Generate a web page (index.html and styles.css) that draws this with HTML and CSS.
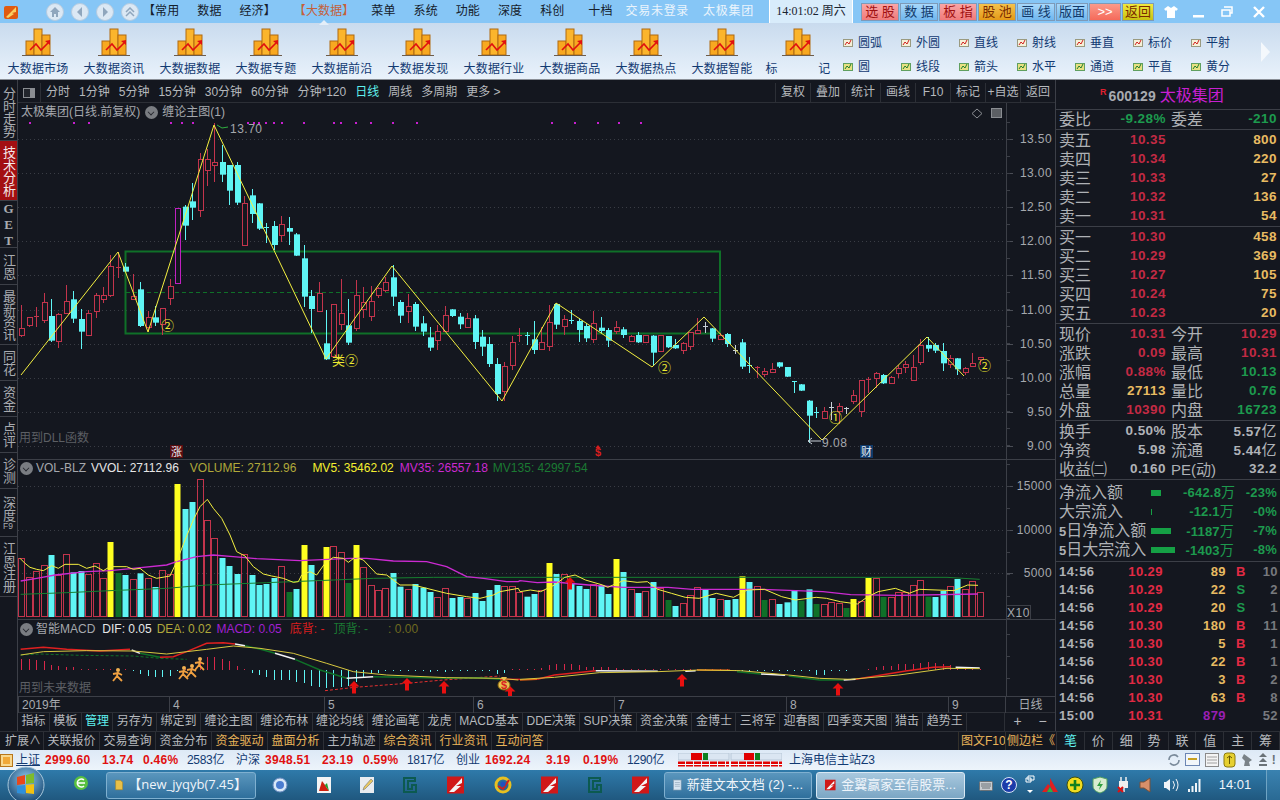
FILE: index.html
```html
<!DOCTYPE html>
<html lang="zh-CN">
<head>
  <meta charset="UTF-8" />
  <title>太极集团 600129</title>
  <link rel="stylesheet" href="styles.css">
</head>
<body>
  <svg class="defs" width="0" height="0">
    <symbol id="bigicon" viewBox="0 0 32 28">
      <rect x="4" y="13" width="8" height="14" fill="#f8a820" stroke="#b06a10" />
      <rect x="12" y="1" width="8" height="26" fill="#fbb52c" stroke="#b06a10" />
      <rect x="20" y="7" width="8" height="20" fill="#f8a820" stroke="#b06a10" />
      <path d="M0 27.5H32" stroke="#6d5c4a" />
      <path d="M8 22l6-6 5 6 7-7" fill="none" stroke="#e01010" stroke-width="1.6" />
      <path d="M23 13l5-1v5z" fill="#e01010" />
    </symbol>
    <symbol id="toolred" viewBox="0 0 10 8">
      <rect x=".5" y=".5" width="9" height="7" fill="#f5f0d8" stroke="#9a9a80" />
      <path d="M2 6l2-3 2 2 2-4" fill="none" stroke="#d02020" />
    </symbol>
    <symbol id="toolgreen" viewBox="0 0 10 8">
      <rect x=".5" y=".5" width="9" height="7" fill="#e8e080" stroke="#60a060" />
      <path d="M2 6l2-3 2 2 2-4" fill="none" stroke="#208030" />
    </symbol>
    <symbol id="redbolt" viewBox="0 0 18 18">
      <rect width="17" height="17" y=".5" fill="#d01818" />
      <path d="M2 16L15 2v5l-6 3 5 0-7 6z" fill="#f4f4f4" />
    </symbol>
    <symbol id="gicon" viewBox="0 0 16 18">
      <path d="M2 2h11v3H6v8h4V9h4v7H2z" fill="none" stroke="#0c5a50" stroke-width="2" />
    </symbol>
  </svg>

  <header class="titlebar">
    <svg class="logo" width="16" height="16" viewBox="0 0 16 16">
      <rect x="1" y="2" width="14" height="13" rx="2" fill="#e05a10" />
      <path d="M3 13L13 3v5l-4 1 2 1-6 4z" fill="#fbd060" />
    </svg>
    <div class="nav-btns">
      <span class="nav-btn"><svg width="10" height="10" viewBox="0 0 10 10"><path d="M5 0L0 5h2v5h2V7h2v3h2V5h2z" fill="#8fa6bd" /></svg></span>
      <span class="nav-btn"><svg width="10" height="10" viewBox="0 0 10 10"><path d="M7 0v10L2 5z" fill="#8fa6bd" /></svg></span>
      <span class="nav-btn"><svg width="10" height="10" viewBox="0 0 10 10"><path d="M3 0v10l5-5z" fill="#8fa6bd" /></svg></span>
      <span class="nav-btn"><svg width="10" height="10" viewBox="0 0 10 10"><path d="M1 5l4-4 4 4M1 9l4-4 4 4" fill="none" stroke="#8fa6bd" stroke-width="1.5" /></svg></span>
    </div>
    <nav class="menu">
      <span>【常用</span><span>数据</span><span>经济】</span>
      <span class="menu-active">【大数据】</span>
      <span>菜单</span><span>系统</span><span>功能</span><span>深度</span><span>科创</span>
      <span class="menu-far">十档</span>
      <span class="menu-login">交易未登录</span>
      <span class="menu-login">太极集团</span>
    </nav>
    <div class="clock">14:01:02 周六</div>
    <div class="quick-btns">
      <span class="qbtn pink wide">选 股</span>
      <span class="qbtn blue wide">数 据</span>
      <span class="qbtn pink wide">板 指</span>
      <span class="qbtn orange wide">股 池</span>
      <span class="qbtn blue wide">画 线</span>
      <span class="qbtn blue">版面</span>
      <span class="qbtn salmon">&gt;&gt;</span>
      <span class="qbtn yellow">返回</span>
    </div>
    <div class="win-btns">
      <svg width="14" height="12" viewBox="0 0 14 12"><path d="M4 0L0 3l2 2 1-1v8h8V4l1 1 2-2-4-3-3 2z" fill="#fff" /></svg>
      <svg width="14" height="12" viewBox="0 0 14 12"><rect x="1" y="9" width="11" height="2.5" fill="#fff" /></svg>
      <svg width="14" height="12" viewBox="0 0 14 12"><path d="M4 1h8v6h-2M2 4h8v6H2z" fill="none" stroke="#fff" stroke-width="1.5" /></svg>
      <svg class="win-close" width="14" height="12" viewBox="0 0 14 12"><path d="M2 1l10 10M12 1L2 11" stroke="#fff" stroke-width="2.4" /></svg>
    </div>
  </header>

  <section class="toolbar">
    <div class="bigtool"><svg width="32" height="28"><use href="#bigicon" /></svg><span>大数据市场</span></div>
    <div class="bigtool"><svg width="32" height="28"><use href="#bigicon" /></svg><span>大数据资讯</span></div>
    <div class="bigtool"><svg width="32" height="28"><use href="#bigicon" /></svg><span>大数据数据</span></div>
    <div class="bigtool"><svg width="32" height="28"><use href="#bigicon" /></svg><span>大数据专题</span></div>
    <div class="bigtool"><svg width="32" height="28"><use href="#bigicon" /></svg><span>大数据前沿</span></div>
    <div class="bigtool"><svg width="32" height="28"><use href="#bigicon" /></svg><span>大数据发现</span></div>
    <div class="bigtool"><svg width="32" height="28"><use href="#bigicon" /></svg><span>大数据行业</span></div>
    <div class="bigtool"><svg width="32" height="28"><use href="#bigicon" /></svg><span>大数据商品</span></div>
    <div class="bigtool"><svg width="32" height="28"><use href="#bigicon" /></svg><span>大数据热点</span></div>
    <div class="bigtool"><svg width="32" height="28"><use href="#bigicon" /></svg><span>大数据智能</span></div>
    <div class="bigtool"><svg width="32" height="28"><use href="#bigicon" /></svg><span class="spread"><i>标</i><i>记</i></span></div>
    <div class="drawtools">
      <span><svg width="10" height="8"><use href="#toolred" /></svg>圆弧</span>
      <span><svg width="10" height="8"><use href="#toolred" /></svg>外圆</span>
      <span><svg width="10" height="8"><use href="#toolred" /></svg>直线</span>
      <span><svg width="10" height="8"><use href="#toolred" /></svg>射线</span>
      <span><svg width="10" height="8"><use href="#toolred" /></svg>垂直</span>
      <span><svg width="10" height="8"><use href="#toolred" /></svg>标价</span>
      <span><svg width="10" height="8"><use href="#toolred" /></svg>平射</span>
      <span><svg width="10" height="8"><use href="#toolgreen" /></svg>圆</span>
      <span><svg width="10" height="8"><use href="#toolgreen" /></svg>线段</span>
      <span><svg width="10" height="8"><use href="#toolgreen" /></svg>箭头</span>
      <span><svg width="10" height="8"><use href="#toolgreen" /></svg>水平</span>
      <span><svg width="10" height="8"><use href="#toolgreen" /></svg>通道</span>
      <span><svg width="10" height="8"><use href="#toolgreen" /></svg>平直</span>
      <span><svg width="10" height="8"><use href="#toolgreen" /></svg>黄分</span>
    </div>
    <div class="tool-next"></div>
  </section>

  <main class="workspace">
    <div class="upper">
      <aside class="sidetabs">
        <div class="stab h58">分时走势</div>
        <div class="stab h60 on">技术分析</div>
        <div class="stab h47 latin">GET</div>
        <div class="stab h37">江恩</div>
        <div class="stab h60">最新资讯</div>
        <div class="stab h36">同花</div>
        <div class="stab h36">资金</div>
        <div class="stab h36">点评</div>
        <div class="stab h36">诊测</div>
        <div class="stab h48">深度<small>F9</small></div>
        <div class="stab h60">江恩注册</div>
      </aside>

      <div class="chartcol">
        <div class="periodbar">
          <span class="toggle"><i></i></span>
          <div class="periods">
            <span>分时</span><span>1分钟</span><span>5分钟</span><span>15分钟</span><span>30分钟</span><span>60分钟</span><span>分钟*120</span>
            <span class="cyan">日线</span><span>周线</span><span>多周期</span><span>更多 &gt;</span>
          </div>
          <div class="period-right">
            <span>复权</span><span>叠加</span><span>统计</span><span>画线</span><span>F10</span><span>标记</span><span>+自选</span><span>返回</span>
          </div>
        </div>

        <div class="pane pane-main" id="pane-main">
          <div class="legend legend-main">
            <span class="muted">太极集团(日线.前复权)</span><i class="dot"></i><span class="muted">缠论主图(1)</span>
          </div>
          <div class="pane-note note-dll">用到DLL函数</div>
        </div>
        <div class="pane pane-vol" id="pane-vol">
          <div class="legend legend-vol">
            <i class="dot"></i><span class="muted">VOL-BLZ</span><span class="white">VVOL: 27112.96</span><span class="olive">VOLUME: 27112.96</span><span class="yel">MV5: 35462.02</span><span class="mag">MV35: 26557.18</span><span class="grn">MV135: 42997.54</span>
          </div>
          <div class="x10">X10</div>
        </div>
        <div class="pane pane-macd" id="pane-macd">
          <div class="legend legend-macd">
            <i class="dot"></i><span class="muted">智能MACD</span><span class="white">DIF: 0.05</span><span class="olive">DEA: 0.02</span><span class="pur">MACD: 0.05</span><span class="red">底背: -</span><span class="grn">顶背: -</span><span class="olive dim">: 0.00</span>
          </div>
          <div class="pane-note note-future">用到未来数据</div>
        </div>

        <div class="dateaxis">
          <span class="d0">2019年</span><span class="d1">4</span><span class="d2">5</span><span class="d3">6</span><span class="d4">7</span><span class="d5">8</span><span class="d6">9</span>
          <span class="dayline">日线</span>
        </div>

        <div class="tabrow">
          <span>指标</span><span>模板</span><span class="cyan">管理</span><span>另存为</span><span>绑定到</span><span>缠论主图</span><span>缠论布林</span><span>缠论均线</span><span>缠论画笔</span><span>龙虎</span><span>MACD基本</span><span>DDE决策</span><span>SUP决策</span><span>资金决策</span><span>金博士</span><span>三将军</span><span>迎春图</span><span>四季变天图</span><span>猎击</span><span>趋势王</span>
          <span class="tab-fill"></span><span class="tab-pm">+</span><span class="tab-pm">−</span>
        </div>
      </div>

      <aside class="quote">
        <div class="q-head"><sup>R</sup><b>600129</b><span>太极集团</span></div>
        <div class="q-sec"><div class="q"><span>委比</span><b class="g">-9.28%</b><span>委差</span><b class="g">-210</b></div></div>
        <div class="q-sec">
          <div class="q book"><span>卖五</span><b class="r">10.35</b><b class="o">800</b></div>
          <div class="q book"><span>卖四</span><b class="r">10.34</b><b class="o">220</b></div>
          <div class="q book"><span>卖三</span><b class="r">10.33</b><b class="o">27</b></div>
          <div class="q book"><span>卖二</span><b class="r">10.32</b><b class="o">136</b></div>
          <div class="q book"><span>卖一</span><b class="r">10.31</b><b class="o">54</b></div>
        </div>
        <div class="q-sec">
          <div class="q book"><span>买一</span><b class="r">10.30</b><b class="o">458</b></div>
          <div class="q book"><span>买二</span><b class="r">10.29</b><b class="o">369</b></div>
          <div class="q book"><span>买三</span><b class="r">10.27</b><b class="o">105</b></div>
          <div class="q book"><span>买四</span><b class="r">10.24</b><b class="o">75</b></div>
          <div class="q book"><span>买五</span><b class="r">10.23</b><b class="o">20</b></div>
        </div>
        <div class="q-sec">
          <div class="q"><span>现价</span><b class="r">10.31</b><span>今开</span><b class="r">10.29</b></div>
          <div class="q"><span>涨跌</span><b class="r">0.09</b><span>最高</span><b class="r">10.31</b></div>
          <div class="q"><span>涨幅</span><b class="r">0.88%</b><span>最低</span><b class="g">10.13</b></div>
          <div class="q"><span>总量</span><b class="o">27113</b><span>量比</span><b class="g">0.76</b></div>
          <div class="q"><span>外盘</span><b class="r">10390</b><span>内盘</span><b class="g">16723</b></div>
        </div>
        <div class="q-sec">
          <div class="q"><span>换手</span><b class="w">0.50%</b><span>股本</span><b class="w">5.57<em>亿</em></b></div>
          <div class="q"><span>净资</span><b class="w">5.98</b><span>流通</span><b class="w">5.44<em>亿</em></b></div>
          <div class="q"><span>收益㈡</span><b class="w">0.160</b><span class="pe">PE(动)</span><b class="w">32.2</b></div>
        </div>
        <div class="q-sec flows">
          <div class="flow"><span>净流入额</span><i class="fbar w10"></i><b>-642.8<em>万</em></b><b>-23%</b></div>
          <div class="flow"><span>大宗流入</span><i class="fbar w1"></i><b>-12.1<em>万</em></b><b>-0%</b></div>
          <div class="flow"><span><strong>5</strong>日净流入额</span><i class="fbar w20"></i><b>-1187<em>万</em></b><b>-7%</b></div>
          <div class="flow"><span><strong>5</strong>日大宗流入</span><i class="fbar w24"></i><b>-1403<em>万</em></b><b>-8%</b></div>
        </div>
        <div class="trades">
          <div class="trade"><b>14:56</b><b class="r2">10.29</b><b class="o">89</b><b class="r2 bs">B</b><b class="n">10</b></div>
          <div class="trade"><b>14:56</b><b class="r2">10.29</b><b class="o">22</b><b class="g bs">S</b><b class="n">2</b></div>
          <div class="trade"><b>14:56</b><b class="r2">10.29</b><b class="o">20</b><b class="g bs">S</b><b class="n">1</b></div>
          <div class="trade"><b>14:56</b><b class="r2">10.30</b><b class="o">180</b><b class="r2 bs">B</b><b class="n">11</b></div>
          <div class="trade"><b>14:56</b><b class="r2">10.30</b><b class="o">5</b><b class="r2 bs">B</b><b class="n">1</b></div>
          <div class="trade"><b>14:56</b><b class="r2">10.30</b><b class="o">22</b><b class="r2 bs">B</b><b class="n">1</b></div>
          <div class="trade"><b>14:56</b><b class="r2">10.30</b><b class="o">3</b><b class="r2 bs">B</b><b class="n">2</b></div>
          <div class="trade"><b>14:56</b><b class="r2">10.30</b><b class="o">63</b><b class="r2 bs">B</b><b class="n">8</b></div>
          <div class="trade"><b>15:00</b><b class="r2">10.31</b><b class="p">879</b><b class="bs"></b><b class="n">52</b></div>
        </div>
      </aside>
    </div>

    <div class="lower">
      <div class="lower-tabs">
        <span>扩展∧</span><span>关联报价</span><span>交易查询</span><span>资金分布</span><span class="amber">资金驱动</span><span class="amber">盘面分析</span><span>主力轨迹</span><span class="amber">综合资讯</span><span class="amber">行业资讯</span><span class="amber">互动问答</span>
      </div>
      <div class="lower-right"><span>图文F10</span><span>侧边栏《</span></div>
      <div class="quote-tabs">
        <span class="cyan">笔</span><span>价</span><span>细</span><span>势</span><span>联</span><span>值</span><span>主</span><span>筹</span>
      </div>
    </div>
  </main>

  <footer class="statusbar">
    <i class="st-icon"></i>
    <a>上证</a>
    <b class="s1">2999.60</b><b class="s2">13.74</b><b class="s3">0.46%</b><span class="s4">2583亿</span>
    <a class="s5">沪深</a>
    <b class="s1">3948.51</b><b class="s2">23.19</b><b class="s3">0.59%</b><span class="s4">1817亿</span>
    <a class="s5">创业</a>
    <b class="s1">1692.24</b><b class="s2 s2b">3.19</b><b class="s3">0.19%</b><span class="s4">1290亿</span>
    <svg class="meters" width="104" height="14" viewBox="0 0 104 14">
      <rect y="0" width="51" height="7" fill="#dbe6f2" stroke="#b8c8d8" />
      <rect x="13" y="0" width="11" height="7" fill="#e00000" />
      <rect x="25" y="0" width="5" height="7" fill="#108020" />
      <rect x="53" y="0" width="51" height="7" fill="#dbe6f2" stroke="#b8c8d8" />
      <rect x="66" y="0" width="10" height="7" fill="#e00000" />
      <rect x="77" y="0" width="5" height="7" fill="#108020" />
      <path d="M0 11h51M53 11h51" stroke="#e00000" stroke-width="5" stroke-dasharray="7 1" />
      <path d="M0 11.5h104" stroke="#f4f8fc" />
    </svg>
    <a class="server">上海电信主站Z3</a>
    <div class="st-tray">
      <svg width="14" height="14" viewBox="0 0 14 14"><path d="M2 7a5 5 0 0 1 9-3M12 7a5 5 0 0 1-9 3" fill="none" stroke="#7a8a9a" stroke-width="1.6" /></svg>
      <svg width="16" height="14" viewBox="0 0 16 14"><rect x=".5" y=".5" width="14" height="12" fill="#f2f6fa" stroke="#6c86b4" /><path d="M3 6h9" stroke="#c8a020" stroke-width="2" /></svg>
      <svg width="14" height="14" viewBox="0 0 14 14"><rect x=".5" y=".5" width="13" height="13" fill="#f4f4f4" stroke="#8a8a8a" /><path d="M2 4h10M2 7h10M2 10h10" stroke="#a0a0a0" /></svg>
      <svg width="13" height="16" viewBox="0 0 13 16"><rect x="1" y="1" width="11" height="14" rx="3" fill="#e6d030" stroke="#8a7a10" /><path d="M6.5 4v8M4 6l2.5-2L9 6" fill="none" stroke="#6a5a00" /></svg>
      <svg width="14" height="14" viewBox="0 0 14 14"><path d="M4 1l8 6-3 2 1 4H4l1-5-3-3z" fill="#7a8288" /></svg>
      <svg width="10" height="14" viewBox="0 0 10 14"><path d="M5 0l4 4H1zM5 5l4 4H1zM1 11h8v2H1z" fill="#6a7278" /></svg>
      <b class="bang">!</b>
    </div>
  </footer>

  <footer class="taskbar">
    <svg class="orb" width="38" height="38" viewBox="0 0 38 38">
      <defs><radialGradient id="orbfill" cx=".5" cy=".35" r=".7"><stop offset="0" stop-color="#8fc8ee" /><stop offset="1" stop-color="#0f3f6a" /></radialGradient></defs>
      <circle cx="19" cy="19" r="18" fill="url(#orbfill)" stroke="#a8c8dc" />
      <path d="M10 11l8-2v9l-8 1z" fill="#e8481c" />
      <path d="M19 9l8-2v10l-8 1z" fill="#7ebb2c" />
      <path d="M10 20l8-1v9l-8-1z" fill="#2e90dc" />
      <path d="M19 19l8-1v10l-8-1z" fill="#f4c210" />
    </svg>
    <span class="tk tk-e"><svg width="14" height="16" viewBox="0 0 14 16"><circle cx="7" cy="8" r="7" fill="#58c040" /><path d="M3 8h8M10 5a4 4 0 1 0 0 6" fill="none" stroke="#fff" stroke-width="1.6" /></svg></span>
    <div class="task-btn tb-folder"><svg width="14" height="18" viewBox="0 0 14 18"><path d="M1 1h8l4 3v13H1z" fill="#e8c048" stroke="#a88420" /></svg>【new_jyqyb(7.45】</div>
    <div class="tk-icons">
      <svg width="16" height="16" viewBox="0 0 16 16"><circle cx="8" cy="8" r="7" fill="#d8e8f8" stroke="#6a8cc0" /><circle cx="8" cy="8" r="4" fill="#4a7cd0" /></svg>
      <svg width="14" height="16" viewBox="0 0 14 16"><rect width="14" height="16" fill="#f4f4f4" /><path d="M2 14l3-10 3 4 4 6z" fill="#d02010" /><path d="M5 4l3 4 2-2 2 8z" fill="#20a030" /></svg>
      <svg width="14" height="16" viewBox="0 0 14 16"><rect width="14" height="16" fill="#e8ecf0" /><path d="M3 13l1-3 7-8 2 2-8 8z" fill="#e8c860" stroke="#777" stroke-width=".6" /></svg>
      <svg width="16" height="18"><use href="#gicon" /></svg>
      <svg width="18" height="18"><use href="#redbolt" /></svg>
      <svg width="18" height="18" viewBox="0 0 18 18"><circle cx="9" cy="9" r="7" fill="none" stroke="#e8c020" stroke-width="3" /><path d="M4 10l5 3 6-9" fill="none" stroke="#d02020" stroke-width="2" /><circle cx="9" cy="8" r="2.5" fill="#2050c0" /></svg>
      <svg width="18" height="18"><use href="#redbolt" /></svg>
      <svg width="16" height="18"><use href="#gicon" /></svg>
      <svg width="18" height="18"><use href="#redbolt" /></svg>
    </div>
    <div class="task-btn tb-note"><svg width="14" height="18" viewBox="0 0 14 18"><rect x="1" y="1" width="12" height="16" fill="#d8e6f2" stroke="#8aa0b4" /><path d="M3 5h8M3 8h8M3 11h8" stroke="#8aa0b4" /></svg>新建文本文档 (2) -...</div>
    <div class="task-btn tb-active"><svg width="18" height="18"><use href="#redbolt" /></svg>金翼赢家至信股票...</div>
    <div class="tray">
      <svg width="14" height="12" viewBox="0 0 14 12"><rect x=".5" y="2.5" width="13" height="9" rx="1" fill="#c8ccd0" stroke="#6a7278" /><path d="M2 5h10M2 7h10M3 9h8" stroke="#6a7278" /></svg>
      <svg width="16" height="16" viewBox="0 0 16 16"><circle cx="8" cy="8" r="7.5" fill="#1c3caa" stroke="#d8e4f4" /><text x="8" y="12" class="tray-q">?</text></svg>
      <svg width="10" height="20" viewBox="0 0 10 20"><path d="M1 3h5v4H1zM3 1h6v4H3z" fill="none" stroke="#fff" /><path d="M2 15h6l-3 3z" fill="#fff" /></svg>
      <svg width="16" height="14" viewBox="0 0 16 14"><path d="M8 0l8 14h-5L8 8z" fill="#e02020" /><path d="M8 8l-3 6H0l6-8z" fill="#e02020" /><path d="M5 14l3-5 3 5z" fill="#30b040" /></svg>
      <svg width="18" height="18" viewBox="0 0 18 18"><circle cx="9" cy="9" r="8" fill="#f0dc20" stroke="#405010" /><path d="M9 4v10M4 9h10" stroke="#108020" stroke-width="2.6" /></svg>
      <svg width="16" height="18" viewBox="0 0 16 18"><path d="M8 1l7 2v7c0 4-4 6-7 7-3-1-7-3-7-7V3z" fill="#d8ecd0" stroke="#50a060" /><path d="M9 4l-4 6h3l-1 4 4-6H8z" fill="#30a040" /></svg>
      <svg width="16" height="18" viewBox="0 0 16 18"><rect x="3" y="5" width="9" height="7" fill="#f0f0f0" /><path d="M5 1v4M10 1v4M8 12v4" stroke="#f0f0f0" stroke-width="1.5" /><path d="M2 11l5 5M7 11l-5 5" stroke="#e01010" stroke-width="2" /></svg>
      <svg width="16" height="16" viewBox="0 0 16 16"><path d="M1 5h4l6-4v14l-6-4H1z" fill="#d8906a" stroke="#7a5038" /></svg>
      <svg width="16" height="14" viewBox="0 0 16 14"><path d="M1 4h2l4-3v12l-4-3H1z" fill="#f0f4f8" /><path d="M10 3q3 4 0 8M13 1q4 6 0 12" fill="none" stroke="#f0f4f8" /></svg>
      <svg width="14" height="14" viewBox="0 0 14 14"><path d="M1 11h2v3H1zM4.5 8h2v6h-2zM8 5h2v9H8zM11.5 1h2v13h-2z" fill="#f0f4f8" /></svg>
      <span class="tray-time">14:01</span>
      <i class="showdesk"></i>
    </div>
  </footer>

  <script src="chart.js"></script>
</body>
</html>
```

FILE: styles.css
```css
/* --- basic reset ---------------------------------------------------- */
* {
  margin: 0;
  padding: 0;
  box-sizing: border-box;
}

:root {
  --bg: #14171f;
  --line: #3c3f47;
  --text: #b6b9bd;
  --cyan: #5ff0ee;
  --amber: #e8b45a;
  --stack: "Liberation Sans", "Noto Sans CJK SC", sans-serif;
}

html, body {
  width: 1280px;
  height: 800px;
  overflow: hidden;
  background: var(--bg);
  color: var(--text);
  font: 12px/1.2 var(--stack);
}

i, em { font-style: normal; }
.defs { position: absolute; }

/* --- title bar ------------------------------------------------------ */
.titlebar {
  height: 23px;
  display: flex;
  align-items: center;
  background: #86c6f6;
  color: #15202b;
}
.logo { margin-left: 3px; }
.nav-btns {
  display: flex;
  gap: 7px;
  margin-left: 27px;
}
.nav-btn {
  width: 18px;
  height: 18px;
  border-radius: 50%;
  background: #dbe8f4;
  border: 1px solid #b4cbe0;
  display: flex;
  align-items: center;
  justify-content: center;
}
.menu {
  width: 624px;
  margin-left: 2px;
  padding-left: 2px;
  display: flex;
  gap: 18px;
  font-size: 12px;
  letter-spacing: 0.1px;
  white-space: nowrap;
}
.menu-active { color: #c4603a; margin: 0 -1px 0 0; position: relative; }
.menu-active::after {
  content: "";
  position: absolute;
  left: 25px;
  bottom: -6px;
  border: 5px solid transparent;
  border-bottom-color: #e4eef8;
  border-top: 0;
}
.menu-far { margin-left: 6px; }
.menu-login { color: #eaf4fc; letter-spacing: 0.7px; margin-left: -5px; }
.menu-login + .menu-login { margin-left: -4px; }
.clock {
  width: 84px;
  height: 23px;
  margin-left: 4px;
  line-height: 22px;
  text-align: center;
  color: #1a2430;
  background: #d8ecfb;
  border-left: 1px solid #fff;
  border-right: 1px solid #fff;
  white-space: nowrap;
  font-family: "Liberation Serif", "Noto Sans CJK SC", serif;
  font-size: 12px;
}
.quick-btns {
  display: flex;
  gap: 1px;
  margin-left: 8px;
}
.qbtn {
  width: 32px;
  height: 18px;
  line-height: 16px;
  text-align: center;
  color: #1a1a1a;
  border: 1px solid #7d9ab8;
  white-space: nowrap;
  font-size: 13px;
}
.qbtn.wide { width: 38px; }
.pink { background: linear-gradient(#f9a6a6, #f07a7a); color: #a01010; }
.blue { background: linear-gradient(#a8d8fb, #6fb6ee); color: #123a6a; }
.orange { background: linear-gradient(#f5c24c, #e49a18); color: #7a2a00; }
.salmon { background: linear-gradient(#fb9a8a, #f56a5a); color: #fff; }
.yellow { background: linear-gradient(#f2ea40, #c8c010); color: #7a2a00; }
.win-btns {
  flex: 1;
  display: flex;
  gap: 14px;
  align-items: center;
  padding-left: 10px;
}
.win-close { margin-left: 4px; }

/* --- big toolbar ---------------------------------------------------- */
.toolbar {
  height: 57px;
  display: flex;
  background: linear-gradient(#c9dbee, #e9f2fb);
  border-bottom: 1px solid #8a8f96;
  color: #123a72;
}
.bigtool {
  width: 76px;
  padding-top: 5px;
  display: flex;
  flex-direction: column;
  align-items: center;
  gap: 6px;
  white-space: nowrap;
  letter-spacing: 0.2px;
}
.bigtool svg { display: block; }
.spread {
  width: 65px;
  display: flex;
  justify-content: space-between;
}
.drawtools {
  margin-left: 7px;
  padding-top: 13px;
  display: grid;
  grid-template-columns: repeat(7, 58px);
  grid-auto-rows: 24px;
}
.drawtools span {
  display: flex;
  align-items: center;
  gap: 5px;
  height: 14px;
}
.tool-next {
  margin: 19px 0 0 12px;
  height: 0;
  border-left: 9px solid #f4f8fc;
  border-top: 10px solid transparent;
  border-bottom: 10px solid transparent;
}

/* --- workspace ------------------------------------------------------ */
.workspace {
  height: 670px;
  background: var(--bg);
}
.upper {
  height: 651px;
  display: flex;
}
.sidetabs {
  width: 18px;
  border-right: 1px solid var(--line);
  padding-top: 3px;
}
.stab {
  width: 17px;
  border-bottom: 1px solid var(--line);
  writing-mode: vertical-rl;
  text-orientation: upright;
  font-size: 13px;
  line-height: 17px;
  letter-spacing: -0.5px;
  text-align: center;
  color: #a8abb0;
  overflow: hidden;
}
.stab.on { background: #a30f12; color: #f4e8e8; }
.stab.latin {
  font-family: "Liberation Serif", serif;
  font-weight: bold;
  letter-spacing: 1px;
  font-size: 13px;
}
.stab small {
  font-size: 9px;
  letter-spacing: 0;
  text-combine-upright: all;
}
.h36 { height: 36px; }
.h37 { height: 37px; }
.h47 { height: 47px; }
.h48 { height: 48px; }
.h58 { height: 58px; }
.h60 { height: 60px; }

.chartcol {
  width: 1038px;
  border-right: 1px solid var(--line);
  padding-top: 3px;
}
.periodbar {
  height: 20px;
  display: flex;
  align-items: center;
  border-bottom: 1px solid #2c2f36;
}
.toggle {
  width: 23px;
  height: 20px;
  display: flex;
  align-items: center;
  justify-content: center;
  border-right: 1px solid #2c2f36;
}
.toggle i {
  width: 12px;
  height: 10px;
  border: 1px solid #8a8d92;
  background: linear-gradient(90deg, #22252c 60%, #8a8d92 60%);
}
.periods {
  flex: 1;
  display: flex;
  gap: 9px;
  padding-left: 5px;
  white-space: nowrap;
}
.period-right { display: flex; height: 20px; }
.period-right span {
  width: 35px;
  line-height: 19px;
  text-align: center;
  border-left: 1px solid #2c2f36;
  white-space: nowrap;
}
.cyan { color: var(--cyan); }

.pane {
  position: relative;
  border-bottom: 1px solid var(--line);
}
.pane svg { display: block; }
.pane-main { height: 357px; }
.pane-vol { height: 160px; }
.pane-macd { height: 77px; }
.legend {
  position: absolute;
  display: flex;
  align-items: center;
  white-space: nowrap;
}
.legend-main { top: 2px; left: 3px; gap: 5px; }
.legend-main .dot { margin-right: -1px; }
.legend-vol { top: 1px; left: 2px; gap: 5px; }
.legend-macd { top: 2px; left: 2px; gap: 5px; }
.dot {
  width: 13px;
  height: 13px;
  border-radius: 50%;
  background: #7a7d82;
  position: relative;
  flex: none;
}
.dot::after {
  content: "";
  position: absolute;
  left: 3px;
  top: 3px;
  width: 5px;
  height: 5px;
  border: solid #22252c;
  border-width: 0 1.5px 1.5px 0;
  transform: rotate(45deg) scale(0.8);
}
.legend-vol .dot { margin-right: -2px; }
.legend-macd .dot { margin-right: -2px; }
.muted { color: #a5a8ad; }
.white { color: #e6e6e6; }
.olive { color: #b0a83a; }
.yel { color: #f4f030; }
.mag { color: #cc2ad2; }
.grn { color: #1b7a33; }
.pur { color: #a020d0; }
.red { color: #d81e1e; }
.legend-vol .olive { margin-left: 6px; }
.legend-vol .yel { margin-left: 11px; }
.legend-vol .mag { margin-left: 1px; }
.legend-macd .white { margin-left: 2px; }
.legend-macd .red { margin-left: 3px; }
.legend-macd .grn { margin-left: 4px; }
.legend-macd .dim { color: #6e6a20; margin-left: 15px; }
.pane-note {
  position: absolute;
  left: 1px;
  color: #5c5f64;
}
.note-dll { top: 328px; }
.note-future { top: 61px; }
.x10 {
  position: absolute;
  left: 988px;
  top: 145px;
  width: 25px;
  height: 14px;
  line-height: 14px;
  text-align: center;
  border: solid #3c3f47;
  border-width: 1px 1px 0 1px;
  color: #a5a8ad;
  letter-spacing: 0.5px;
}

.dateaxis {
  height: 16px;
  display: flex;
  align-items: center;
  border-bottom: 1px solid #2c2f36;
}
.dateaxis span {
  padding-left: 3px;
  border-left: 1px solid var(--line);
  line-height: 16px;
  color: #a8abb0;
  white-space: nowrap;
}
.d0 { width: 151px; }
.d1 { width: 155px; }
.d2 { width: 149px; }
.d3 { width: 141px; }
.d4 { width: 172px; }
.d5 { width: 162px; }
.d6 { width: 57px; }
.dateaxis .dayline { flex: 1; text-align: center; padding: 0; }

.tabrow {
  height: 18px;
  display: flex;
  white-space: nowrap;
}
.tabrow span {
  padding: 0 3.4px;
  line-height: 17px;
  border-right: 1px solid #2c2f36;
}
.tabrow .tab-fill { flex: 1; padding: 0; }
.tabrow .tab-pm {
  width: 25px;
  text-align: center;
  padding: 0;
  font-size: 14px;
  border-right: 0;
  border-left: 0;
}

/* --- quote panel ---------------------------------------------------- */
.quote {
  width: 224px;
  padding-top: 3px;
  font-size: 13px;
}
.q-head {
  height: 27px;
  display: flex;
  align-items: center;
  padding-left: 44px;
  border-bottom: 1px solid var(--line);
  white-space: nowrap;
}
.q-head sup { color: #e02030; font: bold 9px var(--stack); margin: -8px 2px 0 0; }
.q-head b { color: #a8abb0; font-size: 14px; letter-spacing: 0.1px; }
.q-head span { color: #c81fd0; font-size: 16px; margin-left: 4px; }
.q-sec { border-bottom: 1px solid var(--line); padding: 0 3px; }
.q-sec + .q-sec { padding-top: 1px; }
.q {
  height: 19px;
  display: grid;
  grid-template-columns: 32px 75px 37px 1fr;
  align-items: center;
  white-space: nowrap;
}
.q span { font-size: 16px; color: #aeb1b5; line-height: 19px; }
.q span:nth-child(3) { padding-left: 5px; }
.q .pe { font-size: 15px; }
.q b { text-align: right; font-size: 13.5px; letter-spacing: 0.45px; }
.q em { font-size: 15px; font-weight: normal; }
.q.book b:last-child { grid-column: 3 / 5; }
.r { color: #c32a44; }
.r2 { color: #e22a44; }
.g { color: #1d9a4e; }
.o { color: #e8bb62; }
.w { color: #b0b3b8; }
.p { color: #9a1fb4; }

.q-sec + .flows { padding: 3px 2px 2px 3px; }
.flow {
  height: 19px;
  display: grid;
  grid-template-columns: 92px 32px 51px 43px;
  align-items: center;
  white-space: nowrap;
}
.flow span { font-size: 16px; line-height: 19px; color: #aeb1b5; }
.flow strong { font-size: 13px; }
.flow b { color: #1d9a4e; text-align: right; font-size: 13px; letter-spacing: 0.2px; }
.flow em { font-size: 14px; font-weight: normal; }
.fbar { height: 6px; background: #15a045; }
.w10 { width: 10px; }
.w1 { width: 1px; }
.w20 { width: 20px; }
.w24 { width: 24px; }

.trades { padding: 1px 2px 0 3px; }
.trade {
  height: 18px;
  display: grid;
  grid-template-columns: 50px 54px 63px 28px 24px;
  align-items: center;
  font-size: 13px;
  letter-spacing: 0.45px;
  color: #aeb1b5;
}
.trade b { text-align: right; }
.trade b:first-child { text-align: left; }
.trade .bs { text-align: center; padding-left: 2px; }
.trade .o { color: #e8bb62; }
.trade .p { color: #9a1fb4; }
.trade .n { color: #77797e; }

/* --- bottom tabs ---------------------------------------------------- */
.lower {
  height: 19px;
  display: flex;
  white-space: nowrap;
  border-top: 1px solid #2c2f36;
  background: #14171f;
}
.lower-tabs { width: 958px; display: flex; padding-left: 3px; }
.lower-tabs span {
  width: 56px;
  line-height: 18px;
  text-align: center;
  border-right: 1px solid #2c2f36;
}
.lower-tabs span:first-child { width: 41px; }
.amber { color: var(--amber); }
.lower-right { width: 98px; display: flex; color: var(--amber); }
.lower-right span {
  line-height: 18px;
  padding: 0 2px;
  border-left: 1px solid #33302a;
}
.lower-right span:first-child { width: 47px; }
.lower-right span:last-child { padding-left: 1px; }
.quote-tabs { width: 224px; display: flex; border-left: 1px solid #2c2f36; }
.quote-tabs span {
  flex: 1;
  line-height: 18px;
  text-align: center;
  font-size: 13px;
  border-right: 1px solid #2c2f36;
}

/* --- status bar ----------------------------------------------------- */
.statusbar {
  height: 20px;
  display: flex;
  align-items: center;
  background: linear-gradient(#dde9f6, #edf4fb);
  white-space: nowrap;
  font-size: 13px;
  color: #123a72;
}
.st-icon {
  flex: none;
  width: 13px;
  height: 13px;
  margin: 0 3px 0 0;
  background: #f0a838;
  border: 1px solid #b8761a;
  box-shadow: inset 0 0 0 2px #f8d890;
}
.statusbar a { font-size: 12px; text-decoration: underline; width: 25px; flex: none; }
.statusbar .s5 { text-decoration: none; margin-left: 11px; }
.statusbar b { color: #e01010; font-size: 12px; letter-spacing: 0.3px; flex: none; }
.s1 { width: 45px; margin-left: 4px; }
.s2 { width: 35px; margin-left: 12px; }
.s2b { margin-left: 16px; width: 31px; }
.s3 { width: 38px; margin-left: 6px; }
.s4 { width: 38px; margin-left: 6px; font-size: 12px; flex: none; letter-spacing: -0.3px; }
.meters { margin-left: 13px; flex: none; }
.statusbar .server { width: auto; text-decoration: none; margin-left: 7px; font-size: 12px; }
.st-tray {
  margin-left: auto;
  display: flex;
  align-items: center;
  gap: 4px;
  padding-right: 4px;
}
.statusbar .bang { color: #6a7278; }

/* --- taskbar -------------------------------------------------------- */
.taskbar {
  height: 30px;
  position: relative;
  display: flex;
  align-items: center;
  background: linear-gradient(#2f7aaa, #20587f);
  color: #eef4fa;
  white-space: nowrap;
}
.orb {
  position: absolute;
  left: 7px;
  top: -4px;
}
.tk-e { margin-left: 74px; width: 32px; }
.task-btn {
  height: 27px;
  display: flex;
  align-items: center;
  gap: 5px;
  padding: 0 8px;
  border: 1px solid #7fb0d0;
  border-radius: 3px;
  background: linear-gradient(#5a96bd, #2f6f9c);
  font-size: 13px;
  overflow: hidden;
}
.tb-folder { width: 150px; font-family: "Open Sans", "Noto Sans CJK SC", sans-serif; }
.tk-icons {
  width: 408px;
  padding: 0 14px 0 16px;
  display: flex;
  justify-content: space-between;
  align-items: center;
}
.tk-icons svg { flex: none; }
.tb-note { width: 148px; }
.tb-active {
  width: 149px;
  margin-left: 4px;
  background: linear-gradient(#a8c8de, #7ba6c4);
  border-color: #d8e8f4;
}
.tray {
  flex: 1;
  display: flex;
  align-items: center;
  justify-content: space-between;
  padding-left: 14px;
}
.tray-q {
  font: bold 12px "Liberation Sans", sans-serif;
  fill: #fff;
  text-anchor: middle;
}
.tray-time { margin-left: 10px; font-size: 13px; }
.showdesk {
  width: 14px;
  height: 30px;
  background: linear-gradient(#3a82b0, #2a6a94);
  border-left: 1px solid #6fa4c4;
  margin-left: 7px;
}

/* --- chart svg text ------------------------------------------------- */
.axis { font: 12px "Liberation Sans", sans-serif; fill: #a5a8ad; letter-spacing: 0.4px; }
.mark { font: 13px "Noto Sans CJK SC", sans-serif; fill: #f0ec30; }
.small { font: 12px "Liberation Sans", sans-serif; fill: #a5a8ad; letter-spacing: 0.5px; }
.tag { font: 11px "Noto Sans CJK SC", sans-serif; fill: #e8eef6; }
.tag-red { font: bold 11px "Liberation Sans", sans-serif; fill: #d81e1e; }
```

FILE: chart.js
```js
// Every pane is an svg whose viewBox uses page coordinates, so values read
// off the chart can be written down directly.
const NS = "http://www.w3.org/2000/svg";
const RED = "#c3344c";
const CYAN = "#5ff5f5";
const GREEN = "#0f7028";
const YELLOW = "#ffff20";

function pane(id, top, height) {
  const svg = document.createElementNS(NS, "svg");
  svg.setAttribute("width", 1038);
  svg.setAttribute("height", height);
  svg.setAttribute("viewBox", `18 ${top} 1038 ${height}`);
  const host = document.getElementById(id);
  host.insertBefore(svg, host.firstChild);
  return svg;
}

function add(svg, tag, attrs, text) {
  const el = document.createElementNS(NS, tag);
  Object.keys(attrs).forEach((k) => el.setAttribute(k, attrs[k]));
  if (text) el.textContent = text;
  svg.appendChild(el);
  return el;
}

const line = (svg, x1, y1, x2, y2, stroke, extra) =>
  add(svg, "line", Object.assign({ x1, y1, x2, y2, stroke, "shape-rendering": "crispEdges" }, extra));

const poly = (svg, pts, stroke, extra) =>
  add(svg, "polyline", Object.assign({ points: pts.map((p) => p.join(",")).join(" "), stroke, fill: "none" }, extra));

const barX = (i) => 21.3 + 7.43 * i;

function grid(svg, ys, labels) {
  ys.forEach((y, i) => {
    line(svg, 18, y + 0.5, 1006, y + 0.5, "#3a3d45", { "stroke-dasharray": "1 3" });
    if (labels) {
      line(svg, 1006, y + 0.5, 1013, y + 0.5, "#4a4d55");
      add(svg, "text", { x: 1052, y: y + 4, class: "axis", "text-anchor": "end" }, labels[i]);
    }
  });
  line(svg, 1006.5, ys[0] - 40, 1006.5, ys[ys.length - 1] + 100, "#3c3f47");
}

/* --- main chart ----------------------------------------------------- */
// [wick top, body top, body bottom, wick bottom, kind]
const candlesA = [
  [615,683,705,712,"r"],[650,652,675,682,"r"],[620,648,648,680,"r"],[578,606,660,668,"r"],[598,648,722,725,"c"],
  [640,643,725,745,"r"],[555,603,638,640,"r"],[573,598,656,670,"c"],[628,657,695,748,"c"],[630,640,706,706,"r"],
  [580,585,634,655,"r"],[560,584,596,610,"r"],[465,497,585,590,"r"],[455,503,503,533,"r"],[490,500,515,515,"c"],
  [522,588,596,600,"r"],[545,568,678,680,"c"],[632,650,680,695,"r"],[618,652,668,678,"c"],[625,625,672,706,"r"],
  [538,558,595,615,"r"],[325,325,550,550,"m"],[315,320,377,420,"c"],[248,304,323,360,"c"],[160,176,328,352,"r"],
  [148,176,208,258,"r"],[70,187,197,247,"r"],[135,186,224,245,"c"],[195,195,272,315,"c"],[187,195,308,315,"c"],
  [288,310,437,437,"r"],[268,286,342,370,"c"],[310,310,386,390,"c"],[370,381,381,428,"c"],[362,378,435,450,"c"],
  [348,373,405,425,"r"],[352,384,395,435,"c"],[400,403,467,468,"c"],[435,475,590,620,"c"],[570,588,627,700,"c"],
  [546,578,633,635,"r"],[630,730,778,780,"c"],[613,613,770,775,"r"],[538,640,672,690,"r"],[598,676,728,735,"c"],
  [540,586,685,693,"r"],[560,606,628,655,"r"],[558,603,647,662,"r"],[560,565,587,595,"r"],[530,547,570,575,"r"],
  [495,532,590,618,"c"],[600,606,647,668,"c"],[582,619,635,668,"r"],[605,612,680,692,"c"],
];
const candlesB = [
  [258,280,305,318,"c"],[290,322,353,362,"c"],[285,302,328,360,"r"],[228,256,305,305,"r"],[238,238,258,260,"c"],
  [248,260,283,298,"c"],[250,265,292,295,"r"],[255,265,336,358,"c"],[300,320,350,378,"c"],[322,342,402,410,"c"],
  [385,402,492,512,"c"],[395,408,482,512,"r"],[318,335,405,420,"r"],[295,317,317,335,"r"],[305,315,315,345,"c"],
  [272,328,360,372,"c"],[292,335,356,360,"r"],[225,275,347,362,"r"],[220,222,284,298,"c"],[255,268,290,315,"r"],
  [240,270,270,282,"c"],[265,273,300,335,"c"],[280,288,325,335,"c"],[242,280,328,340,"r"],[262,293,303,310,"c"],
  [295,300,332,350,"c"],[272,290,302,312,"r"],[290,298,315,325,"c"],[315,317,332,332,"r"],[305,315,337,340,"c"],
  [316,316,338,340,"r"],[315,317,368,408,"c"],[315,315,362,365,"r"],[318,318,352,355,"c"],[328,345,355,358,"c"],
  [335,340,362,372,"r"],[305,305,347,360,"r"],[265,300,308,312,"r"],[275,290,290,308,"w"],[295,295,326,335,"c"],
  [310,315,326,327,"r"],[310,312,342,350,"c"],[345,362,362,372,"w"],[328,337,410,418,"c"],[382,405,405,430,"c"],
  [408,412,412,445,"r"],[415,422,432,440,"r"],[398,416,424,425,"r"],[397,397,410,415,"c"],[411,411,440,442,"c"],
  [455,455,455,488,"c"],[463,463,482,482,"c"],[510,512,557,638,"c"],[530,547,547,565,"c"],[532,544,566,566,"r"],
  [517,533,533,570,"w"],[520,527,541,582,"r"],[530,535,535,552,"w"],[480,496,514,522,"r"],[451,451,545,560,"r"],
  [440,447,447,488,"r"],[425,430,445,475,"r"],[432,435,460,462,"c"],[438,441,460,462,"r"],[405,415,430,445,"r"],
  [392,403,412,428,"r"],[375,412,450,452,"r"],[328,345,395,405,"r"],[320,345,356,365,"c"],[340,345,362,370,"c"],
  [340,363,400,422,"c"],[375,385,403,415,"r"],[385,385,418,435,"c"],[412,413,425,436,"r"],[370,400,410,410,"r"],
  [380,380,386,405,"r"],
];
const candles = candlesA.map((c) => c.slice(0, 4).map((v) => 100 + v / 3).concat(c[4]))
  .concat(candlesB.map((c) => c.slice(0, 4).map((v) => 230 + v / 3).concat(c[4])));

const main = pane("pane-main", 103, 356);
grid(main, [139, 173, 207, 241, 275, 310, 344, 378, 412, 446],
  ["13.50", "13.00", "12.50", "12.00", "11.50", "11.00", "10.50", "10.00", "9.50", "9.00"]);
for (let y = 122; y < 460; y += 17) line(main, 1006, y + 0.5, 1010, y + 0.5, "#3c3f47");

[29, 73, 88, 170, 181, 192, 247, 253, 258, 265, 273, 281, 303, 333, 340, 355, 370, 392, 416, 551, 574, 597, 618, 640]
  .forEach((x) => add(main, "rect", { x, y: 122, width: 2, height: 2, fill: "#c81fd0" }));

add(main, "rect", { x: 125.5, y: 251.5, width: 594.5, height: 82, fill: "none", stroke: GREEN, "stroke-width": 2 });
line(main, 126, 292.5, 719, 292.5, GREEN, { "stroke-dasharray": "4 3" });

candles.forEach((c, i) => {
  const x = Math.round(barX(i));
  const [top, bodyT, bodyB, bot, kind] = c;
  const color = { r: RED, c: CYAN, m: "#c020c0", w: "#c8d0d8" }[kind];
  line(main, x + 0.5, top, x + 0.5, bot, color);
  if (bodyB - bodyT < 1) {
    line(main, x - 2, bodyT, x + 3, bodyT, color);
  } else if (kind === "c") {
    add(main, "rect", { x: x - 2, y: bodyT, width: 6, height: bodyB - bodyT, fill: color });
  } else {
    add(main, "rect", { x: x - 2, y: Math.round(bodyT) + 0.5, width: 5, height: Math.round(bodyB - bodyT), fill: "#14171f", stroke: color, "shape-rendering": "crispEdges" });
  }
});

poly(main, [[21, 375], [118, 252], [148, 332], [214, 125], [326, 359], [392, 266], [502, 401], [556, 303], [652, 367], [704, 317], [822, 440], [927, 337], [964, 376]], "#f4f040");

add(main, "text", { x: 230, y: 133, class: "small" }, "13.70");
poly(main, [[217, 125], [222, 128], [228, 127]], "#30b040");
add(main, "text", { x: 161, y: 330, class: "mark" }, "②");
add(main, "text", { x: 332, y: 365, class: "mark" }, "类②");
add(main, "text", { x: 658, y: 372, class: "mark" }, "②");
add(main, "text", { x: 829, y: 422, class: "mark" }, "①");
add(main, "text", { x: 978, y: 370, class: "mark" }, "②");
add(main, "text", { x: 822, y: 447, class: "small" }, "9.08");
poly(main, [[808, 441], [821, 441]], "#c8d0d8");
poly(main, [[812, 438], [808, 441], [812, 444]], "#c8d0d8");
add(main, "rect", { x: 860, y: 445, width: 13, height: 13, fill: "#103a6a" });
add(main, "text", { x: 861, y: 456, class: "tag" }, "财");
add(main, "rect", { x: 170, y: 445, width: 13, height: 13, fill: "#5a0d10" });
add(main, "text", { x: 171, y: 456, class: "tag" }, "涨");
add(main, "text", { x: 595, y: 456, class: "tag-red" }, "$");
add(main, "path", { d: "M598 445l2.5 3h-5z", fill: "#d81e1e" });
add(main, "path", { d: "M977 109l5 4.5-5 4.5-5-4.5z", fill: "none", stroke: "#8a8d92" });
add(main, "rect", { x: 991.5, y: 108.5, width: 10, height: 9, fill: "#5c5f64", stroke: "#8a8d92" });

/* --- volume --------------------------------------------------------- */
const volA = "r325 r380 r363 r346 c315 r375 r313 c367 c363 r373 r340 r385 y276 g369 c375 r387 c370 r385 c411 r361 r373 y102 c177 c156 r88 r211 r265 c324 c348 c372 r313 c375 c405 c402 c384 r349 g426 c417 y285 c345 r390 y291 r289 r307 g399 y285 r351 r405 r420 r415 c369 c410 r417 c402 c413 c426 r441 r414 c444 c441 r444 c429 c453 c420 c405 r408 r408";
const volB = "r427 c440 c432 r420 y339 c372 r372 c400 c408 c417 r403 c405 c432 y327 c366 r417 c429 r423 c396 r415 g450 c468 r460 r435 r412 c417 c444 r448 c450 c447 y379 c396 r409 g450 r448 c462 c457 c420 g452 c418 g462 r463 r457 r459 g474 y447 r452 y384 r384 g441 r442 r427 r426 r406 r391 g440 c441 c423 r409 c387 r416 r394 r427";

const vol = pane("pane-vol", 460, 159);
grid(vol, [486, 530, 573], ["15000", "10000", "5000"]);
for (let y = 464; y < 620; y += 22) line(vol, 1006, y + 0.5, 1010, y + 0.5, "#3c3f47");

(volA + " " + volB).split(" ").forEach((v, i) => {
  const x = Math.round(barX(i));
  const top = 450 + Number(v.slice(1)) / 3;
  const h = 617 - top;
  if (v[0] === "r") {
    add(vol, "rect", { x: x - 2.5, y: Math.round(top) + 0.5, width: 6, height: Math.round(h) - 1, fill: "none", stroke: RED, "shape-rendering": "crispEdges" });
  } else {
    const fill = { c: CYAN, y: YELLOW, g: GREEN }[v[0]];
    add(vol, "rect", { x: x - 2.5, y: top, width: 6, height: h, fill });
  }
});

const fromA = (p) => [p[0] / 3, 450 + p[1] / 3];
const fromB = (p) => [520 + p[0] / 2.904, 450 + p[1] / 3];

const mv135 = [[62,433],[200,428],[330,422],[500,415],[620,405],[800,398],[1000,390],[1120,385],[1300,382],[1560,382]].map(fromA)
  .concat([[0,382],[1240,382],[1335,388]].map(fromB));
poly(vol, mv135, "#178030");

const mv35 = [[62,393],[110,385],[165,375],[260,365],[330,362],[400,355],[500,345],[530,335],[590,320],[640,315],[700,320],[770,326],[900,332],[1050,325],[1100,325],[1180,333],[1280,335],[1340,350],[1400,380],[1450,385],[1520,395],[1555,395]].map(fromA)
  .concat([[0,392],[50,398],[100,396],[200,405],[300,412],[430,412],[500,418],[700,418],[880,425],[960,434],[1100,436],[1330,432]].map(fromB));
poly(vol, mv35, "#cc2ad2", { "stroke-width": 1.4 });

const mv5 = [[60,325],[75,340],[90,352],[110,358],[130,362],[155,347],[175,355],[195,343],[235,343],[260,355],[285,348],[310,362],[330,350],[380,350],[400,358],[420,355],[445,375],[470,385],[510,378],[530,335],[555,270],[580,210],[600,170],[622,148],[640,175],[665,205],[690,255],[710,305],[735,318],[760,350],[790,372],[815,378],[850,385],[880,397],[895,395],[905,375],[930,365],[950,375],[975,340],[1000,322],[1030,325],[1045,337],[1065,322],[1090,330],[1130,372],[1160,375],[1200,405],[1240,405],[1280,415],[1340,430],[1400,440],[1440,445],[1480,435],[1500,425],[1555,415]].map(fromA)
  .concat([[0,425],[30,420],[60,425],[100,405],[130,382],[160,375],[190,390],[240,405],[255,412],[270,405],[300,392],[340,397],[370,395],[400,418],[440,430],[480,442],[520,445],[570,430],[620,442],[660,420],[710,418],[760,440],[800,450],[860,442],[890,445],[930,455],[980,462],[1010,440],[1040,425],[1090,415],[1130,430],[1160,418],[1260,422],[1300,405],[1330,406]].map(fromB));
poly(vol, mv5, "#f4f040");

const upArrow = (svg, x, y) =>
  add(svg, "path", { d: `M${x} ${y}l5.5 5.5h-3.5v7h-4v-7h-3.5z`, fill: "#e81010" });
upArrow(vol, 570, 577);

/* --- macd ----------------------------------------------------------- */
const hist = [-32,-32,-30,-27,-15,-12,-10,-8,-3,-2,-2,-2,-2,-2,-2,2,12,18,22,20,18,2,-3,-8,-30,-38,-38,-32,-28,-12,-2,8,15,20,30,30,30,35,40,48,52,55,52,50,47,35,20,12,8,4,2,4,2,2,2,6,4,6,4,2,2,4,2,2,12,8,-3,-3,-4,-4,-6,-15,-17,-18,-18,-15,-10,-8,-10,-8,-5,-3,-2,-2,-2,-2,-2,-2,-2,-2,-2,-2,-2,-2,-2,-2,2,4,2,4,4,2,2,4,2,4,4,15,15,2,2,2,1,-1,-2,-10,-12,-12,-18,-18,-18,-22,-24,-20,-18,-15,-4,-4,-4,-4];

const macd = pane("pane-macd", 620, 76);
line(macd, 1006.5, 620, 1006.5, 697, "#3c3f47");
line(macd, 1055, 620, 1055, 697, "#3c3f47");
for (let y = 634; y < 697; y += 22) line(macd, 1006, y + 0.5, 1010, y + 0.5, "#3c3f47");

hist.forEach((v, i) => {
  const x = Math.round(barX(i)) + 0.5;
  line(macd, x, 670, x, 670 + v / 3, v < 0 ? "#d8284a" : CYAN);
});

const mA = (p) => [p[0] / 3, 450 + p[1] / 3];
poly(macd, [[62,615],[120,612],[240,616],[400,618],[480,625],[560,628]].map(mA), GREEN, { "stroke-dasharray": "3 2" });
poly(macd, [[975,722],[1065,712],[1220,700],[1330,690],[1500,678]].map(mA), "#e03030", { "stroke-dasharray": "3 2" });

[
  ["#e02020", [[62,598],[130,592],[200,598],[300,603],[390,598]]],
  ["#e8e8e8", [[395,600],[420,610]]],
  [GREEN, [[420,610],[480,622]]],
  ["#e02020", [[480,622],[520,620],[560,605],[620,580],[670,578],[705,582]]],
  ["#f4f4f4", [[705,582],[735,587]]],
  [GREEN, [[735,587],[790,600],[825,610]]],
  ["#f4f4f4", [[825,610],[885,628]]],
  [GREEN, [[885,628],[960,660],[1040,685]]],
  ["#f4f4f4", [[1040,685],[1120,680]]],
  [GREEN, [[1120,680],[1220,682],[1340,685],[1440,683],[1500,688]]],
  ["#e02020", [[1500,688],[1560,688]]],
].forEach((s) => poly(macd, s[1].map(mA), s[0], { "stroke-width": 1.5 }));

poly(macd, [[62,615],[130,605],[260,602],[400,603],[500,612],[620,598],[700,588],[780,595],[880,610],[980,640],[1060,665],[1160,675],[1340,683],[1500,685],[1555,690]].map(mA), "#d8c840");

const mB = (p) => [520 + p[0] / 2.904, 450 + p[1] / 3];
[
  ["#e06010", [[0,690],[50,688]]],
  ["#e02020", [[50,688],[100,675],[220,662]]],
  ["#f4f4f4", [[220,662],[400,664]]],
  ["#f4f4f4", [[480,664],[510,662]]],
  ["#e06010", [[515,660],[610,661]]],
  [GREEN, [[630,665],[700,672]]],
  ["#f4f4f4", [[700,672],[770,676]]],
  [GREEN, [[780,678],[870,690],[940,690]]],
  ["#f4f4f4", [[940,690],[975,688]]],
  ["#e02020", [[975,688],[1120,663],[1200,652],[1250,650]]],
  ["#f4f4f4", [[1265,652],[1335,654]]],
].forEach((s) => poly(macd, s[1].map(mB), s[0], { "stroke-width": 1.5 }));
poly(macd, [[0,688],[100,682],[230,668],[400,665],[520,660],[640,662],[780,675],[870,685],[960,688],[1100,675],[1240,655],[1335,656]].map(mB), "#d8c840");

[[354, 681], [407, 678], [444, 681], [510, 686], [682, 674], [838, 683]].forEach((p) => upArrow(macd, p[0], p[1]));

// little orange running men
[[117, 675], [183, 673], [191, 671], [199, 664]].forEach((p) => {
  add(macd, "circle", { cx: p[0] + 1, cy: p[1] - 5, r: 2, fill: "#f0b050" });
  add(macd, "path", { d: `M${p[0] + 1} ${p[1] - 3}l-1 4-4 5M${p[0]} ${p[1] + 1}l5 5M${p[0] - 4} ${p[1] - 1}l5-1 4 2`, fill: "none", stroke: "#f0a040", "stroke-width": 1.8 });
});

// money bag
add(macd, "ellipse", { cx: 504, cy: 685, rx: 6, ry: 5, fill: "#e8c050", stroke: "#8a6a10" });
add(macd, "path", { d: "M501 677h6l-2 3h-2z", fill: "#e8c050" });
add(macd, "text", { x: 501, y: 689, class: "tag-red", "font-size": 9 }, "$");
```
